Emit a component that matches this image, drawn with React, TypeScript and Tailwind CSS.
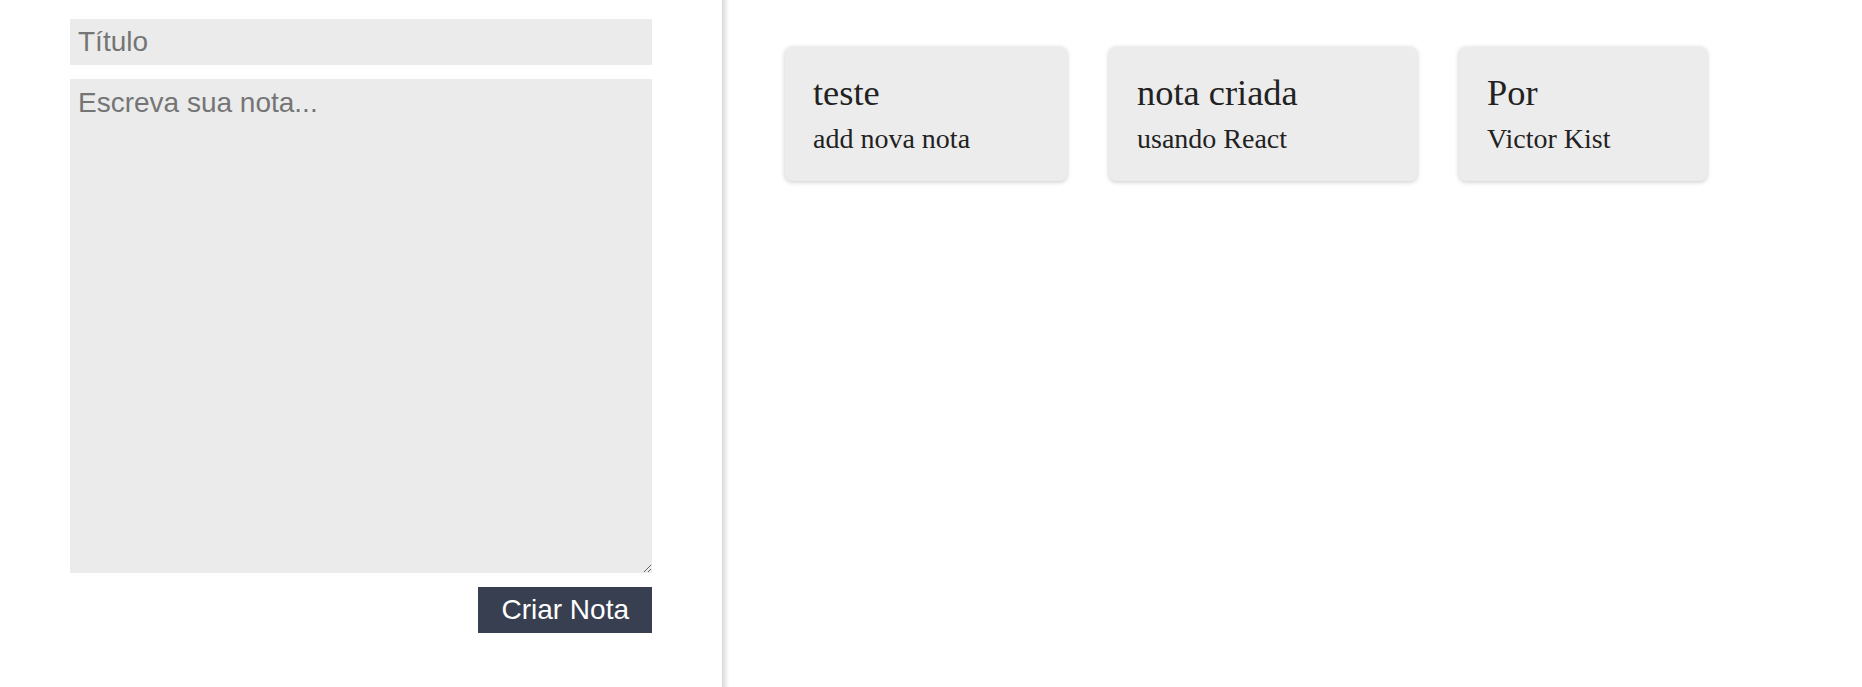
import { useState } from 'react'

type Note = {
  title: string
  body: string
  width: string
}

const notes: Note[] = [
  { title: 'teste', body: 'add nova nota', width: 'w-[282px]' },
  { title: 'nota criada', body: 'usando React', width: 'w-[308px]' },
  { title: 'Por', body: 'Victor Kist', width: 'w-[248px]' },
]

export default function App() {
  const [title, setTitle] = useState('')
  const [text, setText] = useState('')

  return (
    <div className="flex min-h-[687px] w-full bg-white">
      {/* Form column */}
      <aside className="w-[722px] shrink-0 px-[70px] pt-[19px] font-['Liberation_Sans',Arial,sans-serif] text-[28px]">
        <input
          type="text"
          value={title}
          onChange={(e) => setTitle(e.target.value)}
          placeholder="Título"
          className="block h-[46px] w-full bg-[#ebebeb] px-[8px] leading-[32px] text-[#222] outline-none placeholder:text-[#757575]"
        />
        <textarea
          value={text}
          onChange={(e) => setText(e.target.value)}
          placeholder="Escreva sua nota..."
          className="mt-[14px] block h-[494px] w-full resize bg-[#ebebeb] px-[8px] pt-[8px] pb-[6px] leading-[32px] text-[#222] outline-none placeholder:text-[#757575]"
        />
        <div className="mt-[14px] flex justify-end">
          <button className="h-[46px] bg-[#383f51] px-[23px] leading-[32px] text-white">
            Criar Nota
          </button>
        </div>
      </aside>

      {/* Divider shadow */}
      <div className="w-[7px] shrink-0 bg-gradient-to-r from-[#d8d8d8] to-white" />

      {/* Notes */}
      <main className="flex flex-1 items-start gap-[42px] pl-[56px] pt-[47px] font-['Liberation_Serif','Times_New_Roman',serif] text-[#222]">
        {notes.map((note) => (
          <div
            key={note.title}
            className={`${note.width} rounded-[7px] bg-[#ececec] px-[28px] pt-[26px] pb-[26px] shadow-[0_1px_5px_rgba(0,0,0,0.22)]`}
          >
            <h2 className="text-[36.4px] leading-[40px]">{note.title}</h2>
            <p className="mt-[10px] text-[28px] leading-[32px]">{note.body}</p>
          </div>
        ))}
      </main>
    </div>
  )
}
